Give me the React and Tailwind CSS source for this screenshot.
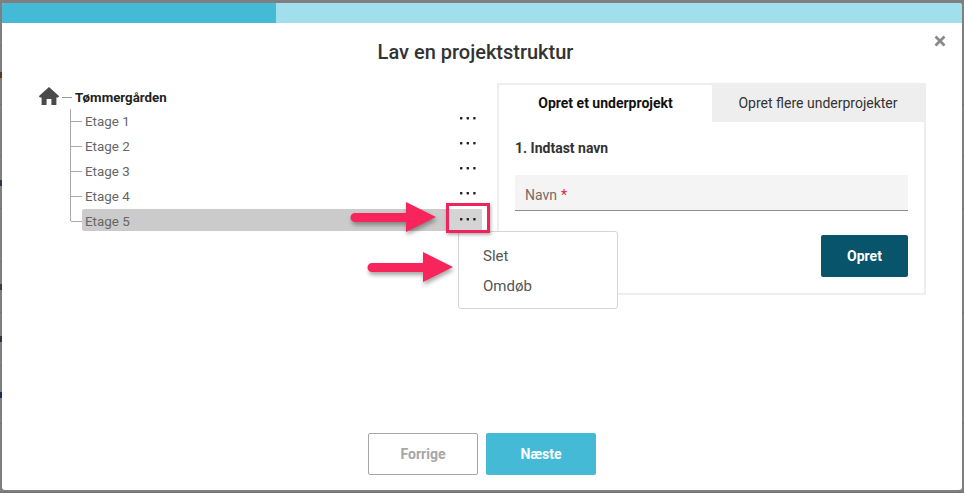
import React from "react";

const rows = ["Etage 1", "Etage 2", "Etage 3", "Etage 4", "Etage 5"];

const backdrop = [
  { h: 46, c: "" },
  { h: 59, c: "bg-[#5a3a1a]" },
  { h: 52, c: "" },
  { h: 52, c: "bg-[#2a3a4a]" },
  { h: 53, c: "" },
  { h: 51, c: "bg-[#3a3a4a]" },
  { h: 53, c: "bg-[#3a3040]" },
  { h: 58, c: "bg-[#1a2a5a]" },
  { h: 69, c: "" },
];

function Dots() {
  return (
    <svg width="16" height="4" viewBox="0 0 16 4" fill="#222">
      <rect x="0" y="1" width="2.4" height="2.4" rx="0.6" />
      <rect x="6.6" y="1" width="2.4" height="2.4" rx="0.6" />
      <rect x="13.2" y="1" width="2.4" height="2.4" rx="0.6" />
    </svg>
  );
}

function Arrow({ className }) {
  return (
    <svg className={className} width="96" height="40" viewBox="0 0 96 40" style={{ filter: "drop-shadow(1px 3px 2px rgba(0,0,0,.35))" }}>
      <path d="M10 15H61V4L91 19L61 34V24H10a4.5 4.5 0 0 1 0-9Z" fill="#f8245c" />
    </svg>
  );
}

export default function App() {
  return (
    <div className="relative w-[964px] h-[493px] bg-[#7f7f7f] overflow-hidden" style={{ fontFamily: "Roboto, sans-serif" }}>
      {backdrop.map((b, i) => (
        <div key={i} className="flex items-center border-b border-[#727272] box-border" style={{ height: b.h }}>
          {b.c ? <span className={`w-[2px] h-[6px] ${b.c}`} /> : null}
        </div>
      ))}

      <div className="absolute left-[2px] top-[3px] w-[960px] h-[487px] bg-white flex flex-col rounded-[3px] overflow-hidden">
        <div className="h-[20px] bg-[#a0dfeb] shrink-0">
          <div className="w-[274px] h-full bg-[#44bad6]" />
        </div>

        <h1 className="mt-[17px] h-[24px] leading-[24px] pr-[13px] text-center text-[20px] font-medium text-[#333]">Lav en projektstruktur</h1>
        <span className="absolute right-[16px] top-[32px] text-[#8a8a8a]">
          <svg width="12" height="12" viewBox="0 0 12 12"><path d="M1.5 1.5L10.5 10.5M10.5 1.5L1.5 10.5" stroke="currentColor" strokeWidth="2.8" /></svg>
        </span>

        <div className="flex mt-[19px] pl-[36px] items-start">
          <div className="w-[446px] shrink-0 pt-[1px] pr-[2px]">
            <div className="flex items-center h-[24px]">
              <svg width="22" height="20" viewBox="0 0 22 20" fill="#4a4a4a">
                <path d="M11 1L0.8 10.2L2 11.4H3.6V19H8.6V13H13.4V19H18.4V11.4H20L21.2 10.2Z" />
              </svg>
              <span className="ml-[2px] w-[10px] h-[1px] bg-[#999] mt-[2px]" />
              <span className="ml-[3px] text-[13.3px] font-bold text-[#222] mt-[3px]">Tømmergården</span>
            </div>
            <div className="relative ml-[32px] mt-[1px] border-l border-[#aaa] h-[112px]">
              {rows.map((r, i) => (
                <div key={r} className="relative h-[25px] flex items-center pl-[11px]">
                  <span className="absolute left-0 top-[12px] w-[11px] h-[1px] bg-[#aaa]" />
                  <div className={`flex-1 flex items-center justify-between h-[22px] pl-[3px] rounded-[2px] ${i === 4 ? "bg-[#cbcbcb] -mt-[4px]" : ""}`}>
                    <span className={`text-[13.4px] text-[#666] ${i === 4 ? "mt-[6px]" : "mt-[2px]"}`}>{r}</span>
                    <span className={`w-[34px] h-[22px] flex items-center justify-end pr-[6px] rounded-[2px] ${i === 4 ? "bg-[#d4d4d4] pb-[1px]" : "-mt-[7px]"}`}><Dots /></span>
                  </div>
                </div>
              ))}
            </div>
          </div>

          <div className="ml-[13px] w-[429px] h-[212px] border-2 border-[#eeeeee] bg-white">
            <div className="flex h-[37px] bg-[#eeeeee]">
              <div className="w-[213px] bg-white rounded-t-[2px] flex items-center justify-center text-[14px] font-bold text-[#111]">Opret et underprojekt</div>
              <div className="flex-1 flex items-center justify-center text-[14px] text-[#333]">Opret flere underprojekter</div>
            </div>
            <div className="px-[16px]">
              <p className="mt-[17px] text-[14px] leading-[18px] font-bold text-[#333]">1. Indtast navn</p>
              <div className="mt-[18px] h-[36px] pt-[6px] bg-[#f4f4f4] border-b border-[#8c8c8c] flex items-center px-[10px] text-[14px] text-[#7a6a60]">
                Navn<span className="ml-[4px] text-[#f0203c]">*</span>
              </div>
              <div className="flex justify-end mt-[24px]">
                <button className="w-[87px] h-[42px] rounded-[2px] bg-[#08546b] text-white text-[14px] font-bold">Opret</button>
              </div>
            </div>
          </div>
        </div>

        <div className="mt-auto mb-[15px] flex justify-center gap-[8px]">
          <button className="w-[110px] h-[42px] rounded-[2px] border border-[#a6a6a6] bg-white text-[#a6a6a6] text-[14px] font-bold">Forrige</button>
          <button className="w-[110px] h-[42px] rounded-[2px] bg-[#44bad6] text-white text-[14px] font-bold">Næste</button>
        </div>

        <div className="absolute left-[456px] top-[228px] w-[160px] h-[78px] bg-white border border-[#d5d5d5] rounded-[3px] pl-[24px] pt-[9px] text-[15px] text-[#555] leading-[30px]">
          <div>Slet</div>
          <div>Omdøb</div>
        </div>
        <div className="absolute left-[444px] top-[200px] w-[44px] h-[30px] border-[3px] border-[#f0245c]" style={{ boxShadow: "1px 2px 3px rgba(0,0,0,.3)" }} />
        <Arrow className="absolute left-[343px] top-[195px]" />
        <Arrow className="absolute left-[360px] top-[245px]" />
      </div>
    </div>
  );
}
